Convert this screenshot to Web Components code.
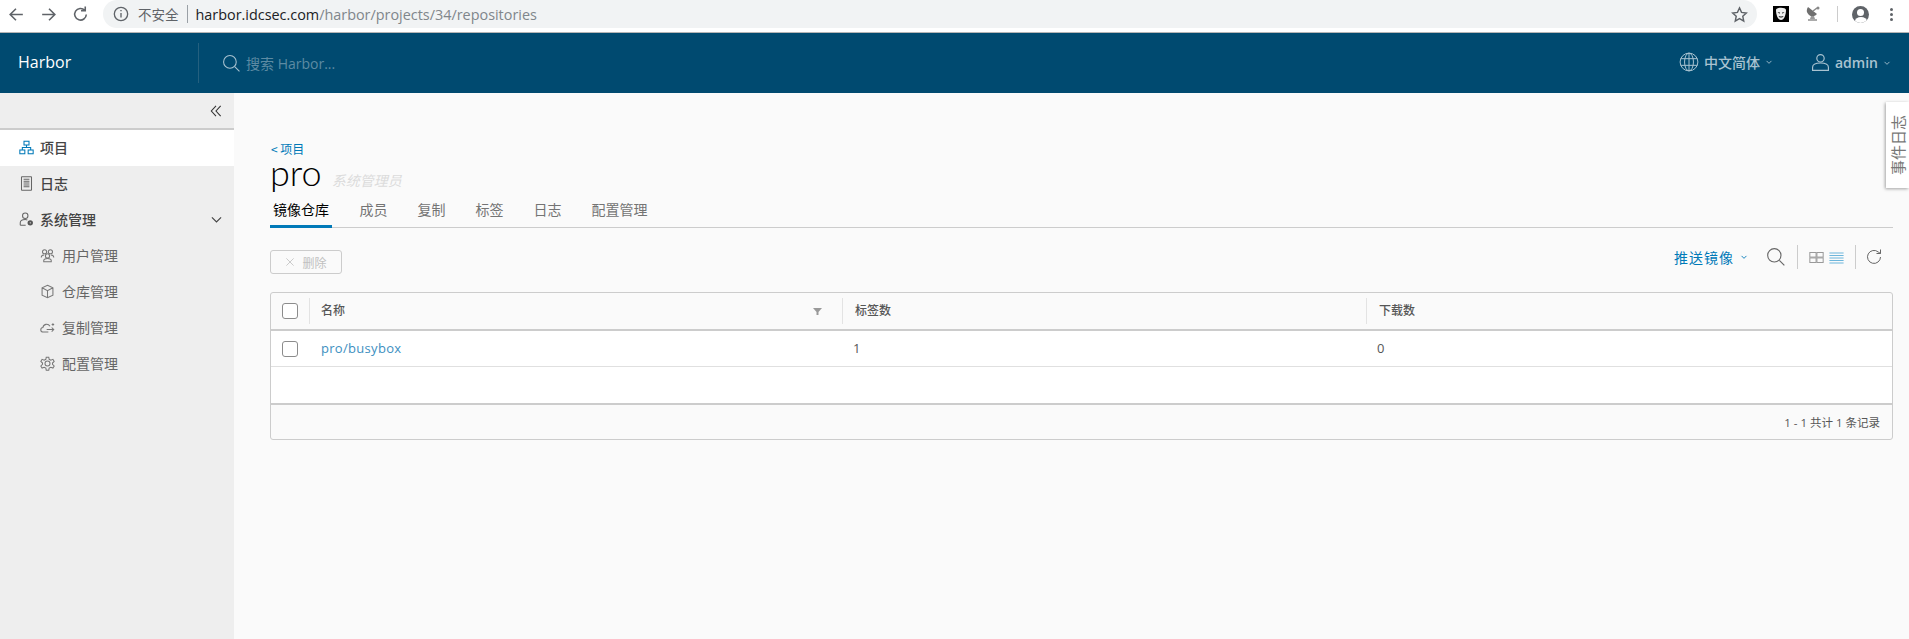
<!DOCTYPE html>
<html lang="zh">
<head>
<meta charset="utf-8">
<title>Harbor</title>
<style>
  html, body { margin: 0; height: 100%; overflow: hidden; background: #fafafa; }
  body { font-family: "Open Sans", "Noto Sans CJK SC", sans-serif; font-size: 14px; color: #565656; }
  harbor-app { height: 639px; }
</style>
</head>
<body>
<harbor-app></harbor-app>

<script>
// line icons, all in a 36x36 box like the clarity set
const ICONS = {
  project: '<rect x="12" y="3" width="12" height="9"/><rect x="2" y="24" width="12" height="9"/><rect x="22" y="24" width="12" height="9"/><path d="M18 12v6M8 24v-6h20v6"/>',
  log: '<rect x="6" y="2" width="24" height="32" rx="1"/><path d="M11 8h14M11 12.500h14M11 17h14M11 21.500h14M11 26h14" />',
  admin: '<circle cx="15" cy="9" r="6.500"/><path d="M3 32v-6c0-5 5-8 12-8 2 0 3 .3 5 1M3 32h13"/><circle cx="27" cy="26" r="4.500" fill="#555" stroke="#555" stroke-width="4"/><circle cx="27" cy="26" r="1.500" fill="#eee" stroke="none"/>',
  users: '<circle cx="11" cy="9" r="5"/><circle cx="25" cy="9" r="5"/><circle cx="18" cy="19" r="5"/><path d="M3 23c0-4 3-6 7-6M33 23c0-4-3-6-7-6M9 33v-3c0-3 4-5 9-5s9 2 9 5v3z"/>',
  box: '<path d="M18 3l13 6v18l-13 6-13-6V9zM5 9l13 7 13-7M18 16v17"/>',
  cloud: '<path d="M20 29H8c-8 0-8-10-1-11 1-8 12-11 17-3M16 23h17M28 18l5 5-5 5M31 8v6M28 11h6"/>',
  gear: '<circle cx="18" cy="18" r="6"/><path d="M15 3h6l1 5 4 2 5-2 3 5-4 4v3l4 4-3 5-5-2-4 2-1 5h-6l-1-5-4-2-5 2-3-5 4-4v-3l-4-4 3-5 5 2 4-2z"/>',
  search: '<circle cx="15" cy="15" r="12"/><path d="M24 24l9 9"/>',
  globe: '<circle cx="18" cy="18" r="16"/><ellipse cx="18" cy="18" rx="8" ry="16"/><path d="M18 2v32M3 12h30M3 24h30"/>',
  user: '<circle cx="18" cy="10" r="7"/><path d="M3 33v-6c0-5 6-8 15-8s15 3 15 8v6z"/>',
  chevron: '<path d="M7 13l11 11 11-11"/>',
  close: '<path d="M5 5l26 26M31 5L5 31"/>',
  collapse: '<path d="M18 5L6 18l12 13M30 5L18 18l12 13"/>',
  grid: '<rect x="2" y="6" width="15" height="11"/><rect x="19" y="6" width="15" height="11"/><rect x="2" y="19" width="15" height="11"/><rect x="19" y="19" width="15" height="11"/>',
  list: '<path d="M1 7h34M1 13h34M1 19h34M1 25h34M1 31h34"/>',
  refresh: '<path d="M31 18a13 13 0 1 1-4.500-10L31 11M31 3v8h-8"/>',
  back: '<path d="M30 18H7M17 7L6 18l11 11"/>',
  forward: '<path d="M6 18h23M19 7l11 11-11 11"/>',
  reload: '<path d="M29 18a11 11 0 1 1-3-8M27 3v8h-8"/>',
  star: '<path d="M18 4l4.300 9.500 10.200 1.200-7.600 7 2.100 10.300-9-5.200-9 5.200 2.100-10.300-7.600-7 10.200-1.200z"/>',
  info: '<circle cx="18" cy="18" r="15"/><path d="M18 16v10M18 9v3"/>'
};

function icon(name, size, color, weight) {
  return `<svg width="${size}" height="${size}" viewBox="0 0 36 36" fill="none" stroke="${color}" stroke-width="${weight || 2}" style="display:block;flex:none">${ICONS[name]}</svg>`;
}

class BrowserBar extends HTMLElement {
  constructor() {
    super();
    this.attachShadow({ mode: 'open' });
    this.shadowRoot.innerHTML = `
      <style>
        :host { display: flex; align-items: flex-start; height: 32px; background: #fff; border-bottom: 1px solid #b5b5b5; flex: none; color: #5f6368; }
        .nav { display: flex; align-items: center; gap: 13px; padding-left: 7px; height: 28px; width: 96px; flex: none; }
        .omni { flex: 1; display: flex; align-items: center; height: 28px; background: #f1f3f4; border-radius: 14px; padding: 0 9px 0 10px; font-family: "Open Sans", "Noto Sans CJK SC", sans-serif; }
        .safe { font-size: 13.500px; margin-left: 9px; color: #5f6368; }
        .sep { width: 1px; height: 18px; background: #9aa0a6; margin: 0 8px; }
        .url { font-size: 14.400px; color: #80868b; flex: 1; }
        .url b { font-weight: 400; color: #202124; }
        .ext { display: flex; align-items: center; height: 28px; width: 152px; flex: none; padding-left: 16px; box-sizing: border-box; }
        .dish { margin-left: 16px; }
        .div { width: 1px; height: 16px; background: #ccc; margin: 0 14px 0 16px; }
        .avatar { width: 17px; height: 17px; border-radius: 50%; background: #5f6368; overflow: hidden; }
        .avatar::before { content: ""; display: block; width: 7px; height: 7px; border-radius: 50%; background: #fff; margin: 3px auto 0; }
        .avatar::after { content: ""; display: block; width: 12px; height: 8px; border-radius: 50%; background: #fff; margin: 1px auto 0; }
        .dots { margin-left: 21px; display: flex; flex-direction: column; gap: 2px; }
        .dots i { display: block; width: 3px; height: 3px; border-radius: 50%; background: #5f6368; }
      </style>
      <div class="nav">${icon('back', 19, '#5f6368', 3)}${icon('forward', 19, '#5f6368', 3)}${icon('reload', 19, '#5f6368', 3)}</div>
      <div class="omni">
        ${icon('info', 16, '#5f6368', 3)}
        <span class="safe">不安全</span><span class="sep"></span>
        <span class="url"><b>harbor.idcsec.com</b>/harbor/projects/34/repositories</span>
        ${icon('star', 17, '#5f6368', 3)}
      </div>
      <div class="ext">
        <svg width="16" height="16" viewBox="0 0 16 16"><rect width="16" height="16"/><path d="M3 4c0-3 10-3 10 0 0 5-2 10-5 10S3 9 3 4z" fill="#eee"/><path d="M4.500 6l2.500 .5-.5 1.200zM11.500 6L9 6.500l.5 1.200zM5.500 10c1 .5 4 .5 5 0-.5 2-4.500 2-5 0z" fill="#222"/></svg>
        <svg class="dish" width="16" height="16" viewBox="0 0 16 16"><path d="M3 1l9 7a5.500 5.500 0 0 1-9-7z" fill="#6f6f6f"/><path d="M8 5l4-3" stroke="#888" stroke-width="1.500"/><circle cx="13" cy="2" r="1.500" fill="#888"/><path d="M6 10h3l1 3H5z" fill="#999"/><rect x="3" y="13" width="9" height="2" fill="#aaa"/></svg>
        <span class="div"></span>
        <span class="avatar"></span>
        <span class="dots"><i></i><i></i><i></i></span>
      </div>`;
  }
}

class AppHeader extends HTMLElement {
  constructor() {
    super();
    this.attachShadow({ mode: 'open' });
    this.shadowRoot.innerHTML = `
      <style>
        :host { display: flex; align-items: center; height: 60px; background: #004a70; flex: none; font-family: "Open Sans", "Noto Sans CJK SC", sans-serif; }
        .brand { width: 180px; padding-left: 18px; color: #fff; font-size: 16px; flex: none; margin-top: -2px; }
        .search { display: flex; align-items: center; height: 40px; border-left: 1px solid #24607f; padding-left: 23px; flex: 1; color: #5d8ba3; font-size: 14px; gap: 5px; }
        .menu { display: flex; align-items: center; color: #a9c3d1; font-size: 14px; font-weight: 500; }
        .lang { display: flex; align-items: center; gap: 5px; width: 132px; margin-top: -2px; }
        .lang span { font-family: "Noto Sans CJK SC", sans-serif; }
        .who { display: flex; align-items: center; gap: 5px; width: 98px; font-weight: 600; margin-top: -1px; }
      </style>
      <div class="brand">Harbor</div>
      <div class="search">${icon('search', 19, '#a9c3d1', 2)}<span>搜索 Harbor...</span></div>
      <div class="menu">
        <div class="lang">${icon('globe', 20, '#a9c3d1', 1.800)}<span>中文简体</span>${icon('chevron', 8, '#a9c3d1', 4)}</div>
        <div class="who">${icon('user', 19, '#a9c3d1', 2.200)}<span>admin</span>${icon('chevron', 8, '#a9c3d1', 4)}</div>
      </div>`;
  }
}

class NavItem extends HTMLElement {
  constructor() {
    super();
    this.attachShadow({ mode: 'open' });
    const active = this.hasAttribute('active');
    const sub = this.hasAttribute('sub');
    const color = active ? '#0079b8' : (sub ? '#777' : '#666');
    this.shadowRoot.innerHTML = `
      <style>
        :host { display: flex; align-items: center; box-sizing: border-box; height: 36px; padding-bottom: 2px; gap: ${sub ? 7 : 6}px; padding-left: ${sub ? 40 : 19}px; padding-right: 10px; background: ${active ? '#fff' : 'transparent'}; font-weight: ${sub ? 400 : 500}; color: ${sub ? '#666' : '#444'}; font-size: 14px; }
        .label { flex: 1; }
      </style>
      ${icon(this.getAttribute('icon'), 15, color, 2.500)}
      <span class="label"><slot></slot></span>
      ${this.hasAttribute('open') ? icon('chevron', 15, '#444', 2.800) : ''}`;
  }
}

class SideNav extends HTMLElement {
  constructor() {
    super();
    this.attachShadow({ mode: 'open' });
    this.shadowRoot.innerHTML = `
      <style>
        :host { display: block; width: 234px; flex: none; background: #eee; font-family: "Noto Sans CJK SC", sans-serif; }
        .top { display: flex; justify-content: flex-end; align-items: center; height: 35px; padding-right: 11px; border-bottom: 2px solid #ccc; }
      </style>
      <div class="top">${icon('collapse', 14, '#333', 2.800)}</div>
      <slot></slot>`;
  }
}

class TabBar extends HTMLElement {
  constructor() {
    super();
    this.attachShadow({ mode: 'open' });
    const tabs = ['镜像仓库', '成员', '复制', '标签', '日志', '配置管理'];
    this.shadowRoot.innerHTML = `
      <style>
        :host { display: flex; gap: 25px; height: 32px; border-bottom: 1px solid #ccc; box-sizing: border-box; font-family: "Noto Sans CJK SC", sans-serif; font-size: 14px; color: #747474; }
        span { display: block; padding: 0 2.500px; height: 32px; box-sizing: border-box; line-height: 26px; }
        .on { color: #000; border-bottom: 3px solid #0079b8; padding: 0 3px; }
      </style>
      ${tabs.map((t, i) => `<span class="${i === 0 ? 'on' : ''}">${t}</span>`).join('')}`;
  }
}

class RepoToolbar extends HTMLElement {
  constructor() {
    super();
    this.attachShadow({ mode: 'open' });
    this.shadowRoot.innerHTML = `
      <style>
        :host { display: flex; justify-content: space-between; align-items: flex-start; font-family: "Noto Sans CJK SC", sans-serif; }
        .del { display: flex; align-items: center; justify-content: center; gap: 7px; width: 72px; height: 24px; margin-top: 5px; box-sizing: border-box; border: 1px solid #ccc; border-radius: 3px; color: #c0c0c0; font-size: 12px; }
        .tools { display: flex; align-items: center; height: 24px; padding-right: 10px; }
        .push { display: flex; align-items: center; gap: 6px; color: #0079b8; font-size: 14px; letter-spacing: 1px; margin-right: 18px; margin-top: -1px; }
        .bar { width: 1px; height: 24px; background: #ccc; }
      </style>
      <div class="del">${icon('close', 10, '#b5b5b5', 2.500)}<span>删除</span></div>
      <div class="tools">
        <div class="push"><span>推送镜像</span>${icon('chevron', 8, '#0079b8', 4)}</div>
        ${icon('search', 20, '#666', 2)}
        <span class="bar" style="margin:0 11px"></span>
        ${icon('grid', 15, '#999', 2.400)}
        <span style="width:5px"></span>
        ${icon('list', 15, '#6db6dc', 2.500)}
        <span class="bar" style="margin:0 9px 0 11px"></span>
        ${icon('refresh', 18, '#666', 2)}
      </div>`;
  }
}

class RepoGrid extends HTMLElement {
  constructor() {
    super();
    this.attachShadow({ mode: 'open' });
    this.shadowRoot.innerHTML = `
      <style>
        :host { display: block; margin-top: 18px; border: 1px solid #ccc; border-radius: 3px; background: #fafafa; font-family: "Open Sans", "Noto Sans CJK SC", sans-serif; font-size: 13px; color: #565656; }
        .row { display: grid; grid-template-columns: 38px 533px 524px 1fr; align-items: center; }
        .head { height: 36px; border-bottom: 2px solid #ccc; font-weight: 500; font-size: 12px; font-family: "Noto Sans CJK SC", sans-serif; }
        .head > div { height: 26px; display: flex; align-items: center; border-left: 1px solid #e3e3e3; padding-left: 11px; padding-right: 20px; justify-content: space-between; padding-bottom: 4px; box-sizing: border-box; }
        .head > div:nth-child(n+3) { padding-left: 12px; }
        .head > .c { border-left: 0; padding: 0 0 0 11px; }
        .body { background: #fff; }
        .line { height: 35px; border-bottom: 1px solid #e0e0e0; }
        .line > div { padding-left: 12px; padding-bottom: 2px; color: #565656; }
        .line > div:nth-child(n+3) { padding-left: 11px; }
        .line > .c { padding: 0 0 0 11px; }
        .blank { height: 36px; border-bottom: 2px solid #ccc; }
        a { color: #3d8fbf; letter-spacing: .3px; }
        .box { display: block; width: 14px; height: 14px; border: 1px solid #8c8c8c; border-radius: 3px; background: #fff; }
        .foot { height: 34px; display: flex; align-items: center; justify-content: flex-end; padding-right: 12px; font-size: 11.500px; }
      </style>
      <div class="row head">
        <div class="c"><span class="box"></span></div>
        <div><span>名称</span><svg width="9" height="9" viewBox="0 0 9 9" style="margin-top:4px"><path d="M0 1h9L5.500 5v3h-2V5z" fill="#999"/></svg></div>
        <div><span>标签数</span></div>
        <div><span>下载数</span></div>
      </div>
      <div class="body">
        <div class="row line">
          <div class="c"><span class="box"></span></div>
          <div><a>pro/busybox</a></div>
          <div>1</div>
          <div>0</div>
        </div>
        <div class="blank"></div>
      </div>
      <div class="foot">1 - 1 共计 1 条记录</div>`;
  }
}

class EventTab extends HTMLElement {
  constructor() {
    super();
    this.attachShadow({ mode: 'open' });
    this.shadowRoot.innerHTML = `
      <style>
        :host { position: absolute; right: 0; top: 102px; width: 23px; height: 86px; background: #fff; box-shadow: -1px 1px 3px rgba(0,0,0,.35); display: flex; align-items: center; justify-content: center; font-family: "Noto Sans CJK SC", sans-serif; font-size: 15px; color: #777; }
        span { writing-mode: vertical-rl; text-orientation: sideways; transform: rotate(180deg); }
      </style>
      <span>事件日志</span>`;
  }
}

class ProjectPage extends HTMLElement {
  constructor() {
    super();
    this.attachShadow({ mode: 'open' });
    this.shadowRoot.innerHTML = `
      <style>
        :host { display: block; flex: 1; min-width: 0; padding: 48px 16px 0 36px; background: #fafafa; position: relative; }
        .crumb { height: 12px; line-height: 16px; font-size: 12px; color: #0079b8; padding-left: 1px; font-family: "Noto Sans CJK SC", sans-serif; }
        .title { display: flex; align-items: baseline; gap: 10px; height: 43px; }
        .name { font-family: Lato, sans-serif; font-weight: 300; font-size: 36px; line-height: 38px; color: #000; }
        .role { font-family: "Noto Sans CJK SC", sans-serif; font-style: italic; font-size: 14px; color: #dcdcdc; }
        repo-toolbar { margin-top: 17px; }
      </style>
      <div class="crumb">&lt; 项目</div>
      <div class="title"><span class="name">pro</span><span class="role">系统管理员</span></div>
      <tab-bar></tab-bar>
      <repo-toolbar></repo-toolbar>
      <repo-grid></repo-grid>`;
  }
}

class HarborApp extends HTMLElement {
  constructor() {
    super();
    this.attachShadow({ mode: 'open' });
    this.shadowRoot.innerHTML = `
      <style>
        :host { display: flex; flex-direction: column; position: relative; overflow: hidden; }
        .body { display: flex; flex: 1; min-height: 0; }
      </style>
      <browser-bar></browser-bar>
      <app-header></app-header>
      <div class="body">
        <side-nav>
          <nav-item icon="project" active>项目</nav-item>
          <nav-item icon="log">日志</nav-item>
          <nav-item icon="admin" open>系统管理</nav-item>
          <nav-item icon="users" sub>用户管理</nav-item>
          <nav-item icon="box" sub>仓库管理</nav-item>
          <nav-item icon="cloud" sub>复制管理</nav-item>
          <nav-item icon="gear" sub>配置管理</nav-item>
        </side-nav>
        <project-page></project-page>
      </div>
      <event-tab></event-tab>`;
  }
}

customElements.define('browser-bar', BrowserBar);
customElements.define('app-header', AppHeader);
customElements.define('nav-item', NavItem);
customElements.define('side-nav', SideNav);
customElements.define('tab-bar', TabBar);
customElements.define('repo-toolbar', RepoToolbar);
customElements.define('repo-grid', RepoGrid);
customElements.define('event-tab', EventTab);
customElements.define('project-page', ProjectPage);
customElements.define('harbor-app', HarborApp);
</script>
</body>
</html>
